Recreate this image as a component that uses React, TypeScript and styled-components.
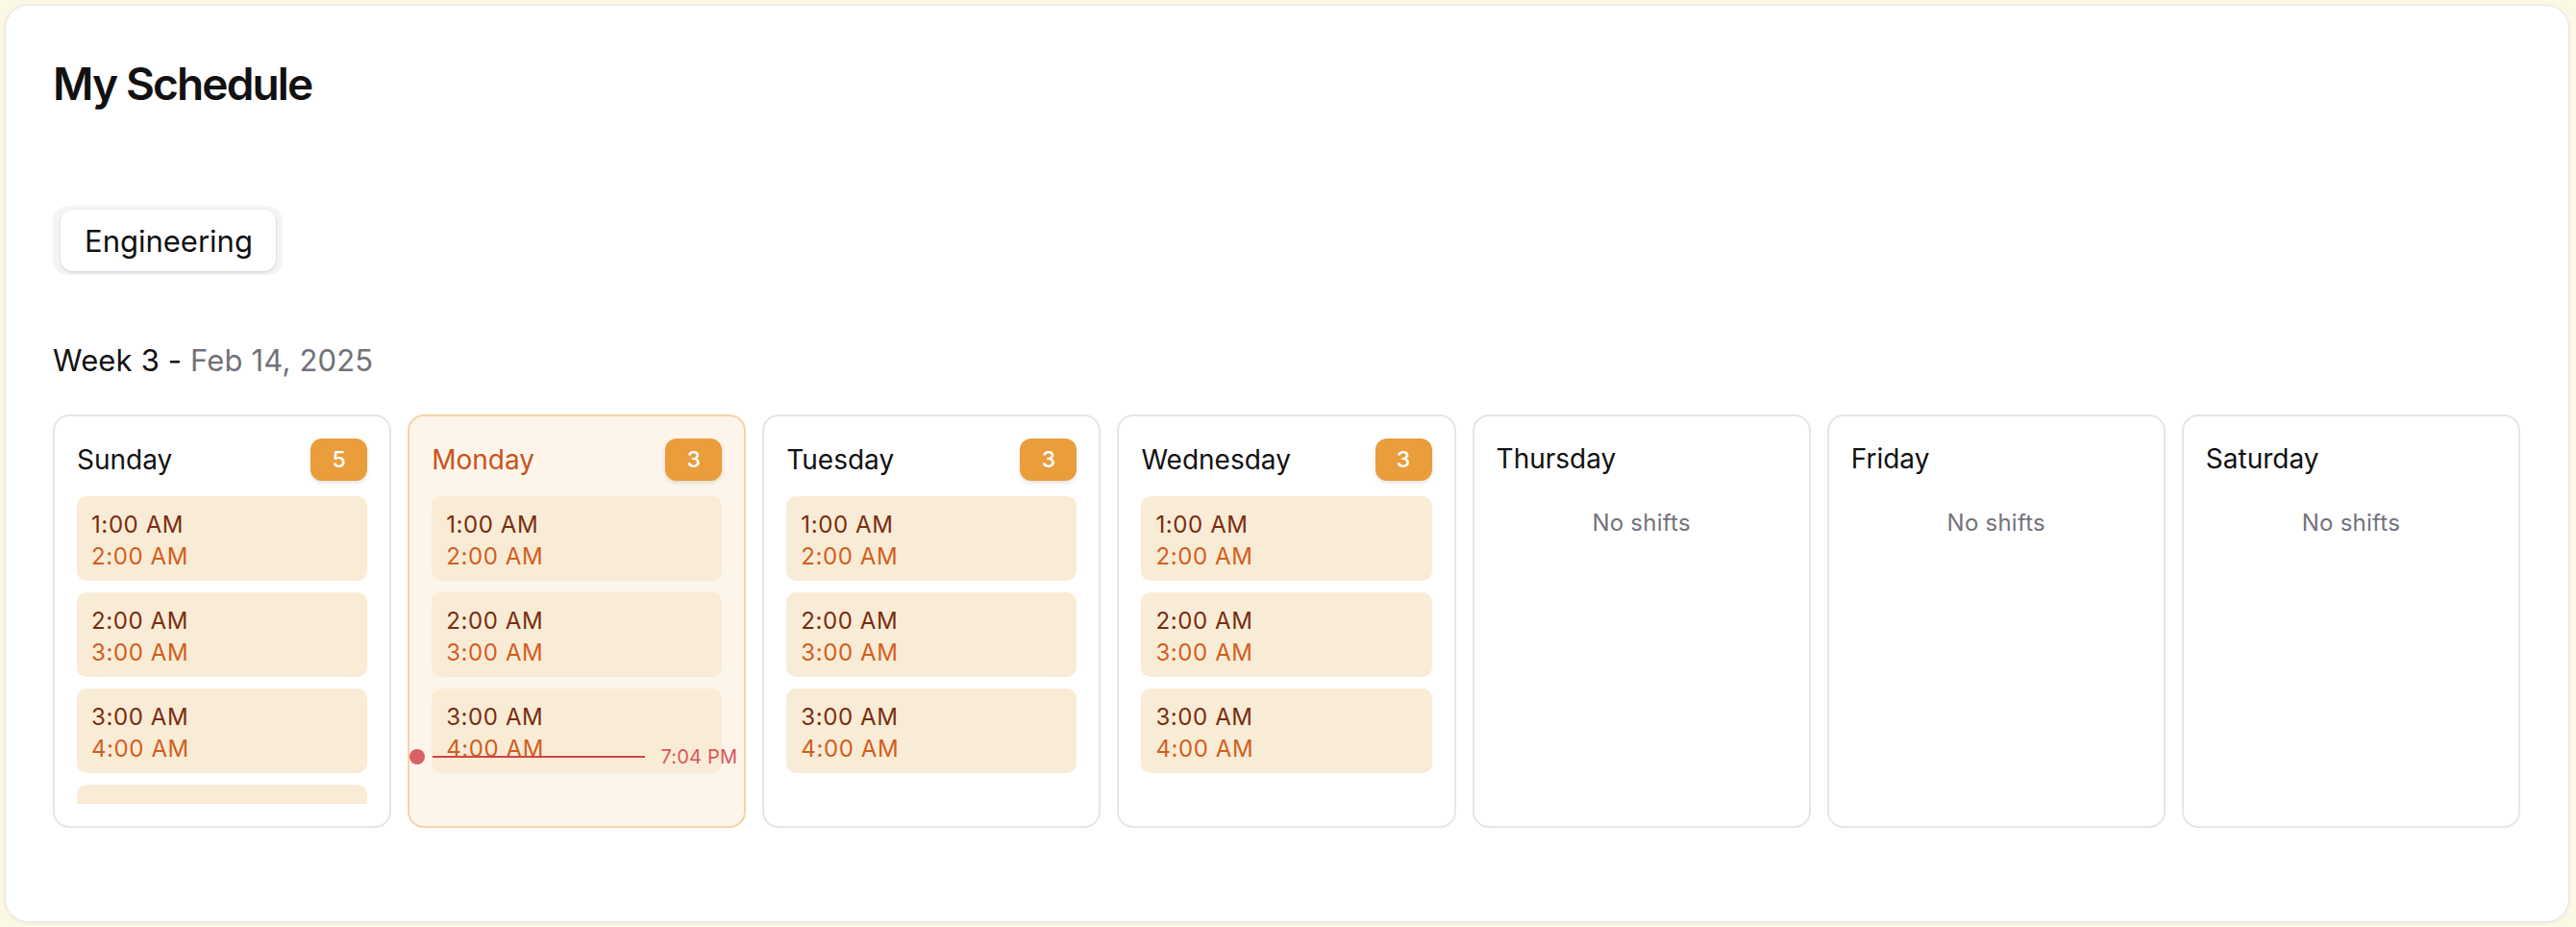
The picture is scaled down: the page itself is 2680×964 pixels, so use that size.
import React from 'react';
import styled, { createGlobalStyle } from 'styled-components';

const GlobalStyle = createGlobalStyle`
  *, *::before, *::after { box-sizing: border-box; }
  html, body { margin: 0; background: #fcf8e6; }
  body {
    padding: 5px 7px 5px 5px;
    font-family: Inter, "Noto Sans", "Liberation Sans", sans-serif;
    color: #111111;
  }
`;

const Panel = styled.main`
  height: 954px;
  background: #ffffff;
  border: 1px solid #e5e5e7;
  border-radius: 24px;
  box-shadow: 0 1px 4px rgba(0, 0, 0, 0.07);
  padding: 49px 50px 49px 49px;
  display: flex;
  flex-direction: column;
`;

const Title = styled.h1`
  margin: 4px 0 0;
  font-size: 46px;
  line-height: 56px;
  font-weight: 600;
  letter-spacing: -0.04em;
  color: #111111;
`;

const TabList = styled.div`
  margin-top: 99px;
  align-self: flex-start;
  display: flex;
  padding: 4px 7px 4px 8px;
  background: #f4f4f4;
  border-radius: 16px;
`;

const Tab = styled.button`
  height: 64px;
  padding: 0 24px 0 25px;
  border: none;
  border-radius: 13px;
  background: #ffffff;
  box-shadow: 0 1px 3px rgba(0, 0, 0, 0.16);
  font-family: inherit;
  font-size: 31px;
  font-weight: 400;
  color: #111111;
  cursor: pointer;
`;

const WeekHeading = styled.h2`
  margin: 71px 0 0;
  font-size: 31px;
  line-height: 36px;
  font-weight: 400;
  letter-spacing: 0.005em;
  color: #111111;
`;

const WeekDate = styled.span`
  color: #71717a;
`;

const WeekGrid = styled.div`
  margin-top: 38px;
  display: grid;
  grid-template-columns: repeat(7, minmax(0, 1fr));
  gap: 17px;
`;

const DayCard = styled.section<{ $today?: boolean }>`
  position: relative;
  display: flex;
  flex-direction: column;
  gap: 16px;
  padding: 23px;
  border: 2px solid ${(p) => (p.$today ? '#f4d3a5' : '#e6e6e6')};
  background: ${(p) => (p.$today ? '#fdf5ea' : '#ffffff')};
  border-radius: 17px;
`;

const DayHeader = styled.div`
  display: flex;
  align-items: center;
  justify-content: space-between;
  min-height: 42px;
`;

const DayName = styled.h3<{ $today?: boolean }>`
  margin: 0;
  font-size: 28px;
  line-height: 42px;
  font-weight: 400;
  color: ${(p) => (p.$today ? '#c9531b' : '#111111')};
`;

const CountBadge = styled.span`
  display: flex;
  align-items: center;
  justify-content: center;
  min-width: 59px;
  height: 44px;
  border-radius: 12px;
  background: #e99d3b;
  box-shadow: 0 2px 4px rgba(0, 0, 0, 0.12);
  color: #ffffff;
  font-size: 23px;
  font-weight: 500;
`;

const ShiftList = styled.div`
  display: flex;
  flex-direction: column;
  gap: 12px;
  max-height: 320px;
  overflow: hidden;
`;

const Shift = styled.div`
  flex-shrink: 0;
  height: 88px;
  padding: 14px 15px 9px;
  border-radius: 10px;
  background: #f9ecd6;
`;

const ShiftStart = styled.div`
  font-size: 24px;
  line-height: 32px;
  font-weight: 400;
  letter-spacing: 0.025em;
  color: #7a2c10;
`;

const ShiftEnd = styled.div`
  margin-top: 1px;
  font-size: 24px;
  line-height: 32px;
  font-weight: 400;
  letter-spacing: 0.025em;
  color: #d25e1f;
`;

const EmptyNote = styled.div`
  padding: 12px 0;
  text-align: center;
  font-size: 24px;
  line-height: 36px;
  letter-spacing: 0.01em;
  color: #73737c;
`;

const NowIndicator = styled.div`
  position: absolute;
  left: 0;
  right: 7px;
  height: 24px;
  display: flex;
  align-items: center;
  pointer-events: none;
  z-index: 2;
`;

const NowDot = styled.span`
  flex-shrink: 0;
  width: 16px;
  height: 16px;
  border-radius: 50%;
  background: #d96062;
  margin-right: 8px;
`;

const NowLine = styled.span`
  flex: 1;
  height: 2px;
  background: #d24545;
`;

const NowLabel = styled.span`
  margin-left: 16px;
  font-size: 20px;
  line-height: 24px;
  color: #d9555a;
  letter-spacing: 0.01em;
`;

type ShiftData = { start: string; end: string };
type Day = { name: string; shifts: ShiftData[]; today?: boolean };

const base: ShiftData[] = [
  { start: '1:00 AM', end: '2:00 AM' },
  { start: '2:00 AM', end: '3:00 AM' },
  { start: '3:00 AM', end: '4:00 AM' },
];

const days: Day[] = [
  {
    name: 'Sunday',
    shifts: [
      ...base,
      { start: '4:00 AM', end: '5:00 AM' },
      { start: '5:00 AM', end: '6:00 AM' },
    ],
  },
  { name: 'Monday', shifts: base, today: true },
  { name: 'Tuesday', shifts: base },
  { name: 'Wednesday', shifts: base },
  { name: 'Thursday', shifts: [] },
  { name: 'Friday', shifts: [] },
  { name: 'Saturday', shifts: [] },
];

const nowOffset = 342;

export default function App() {
  return (
    <>
      <GlobalStyle />
      <Panel>
        <Title>My Schedule</Title>
        <TabList>
          <Tab>Engineering</Tab>
        </TabList>
        <WeekHeading>
          Week 3 - <WeekDate>Feb 14, 2025</WeekDate>
        </WeekHeading>
        <WeekGrid>
          {days.map((day) => (
            <DayCard key={day.name} $today={day.today}>
              <DayHeader>
                <DayName $today={day.today}>{day.name}</DayName>
                {day.shifts.length > 0 && <CountBadge>{day.shifts.length}</CountBadge>}
              </DayHeader>
              {day.shifts.length > 0 ? (
                <ShiftList>
                  {day.shifts.map((s) => (
                    <Shift key={s.start}>
                      <ShiftStart>{s.start}</ShiftStart>
                      <ShiftEnd>{s.end}</ShiftEnd>
                    </Shift>
                  ))}
                </ShiftList>
              ) : (
                <EmptyNote>No shifts</EmptyNote>
              )}
              {day.today && (
                <NowIndicator style={{ top: nowOffset }}>
                  <NowDot />
                  <NowLine />
                  <NowLabel>7:04 PM</NowLabel>
                </NowIndicator>
              )}
            </DayCard>
          ))}
        </WeekGrid>
      </Panel>
    </>
  );
}
